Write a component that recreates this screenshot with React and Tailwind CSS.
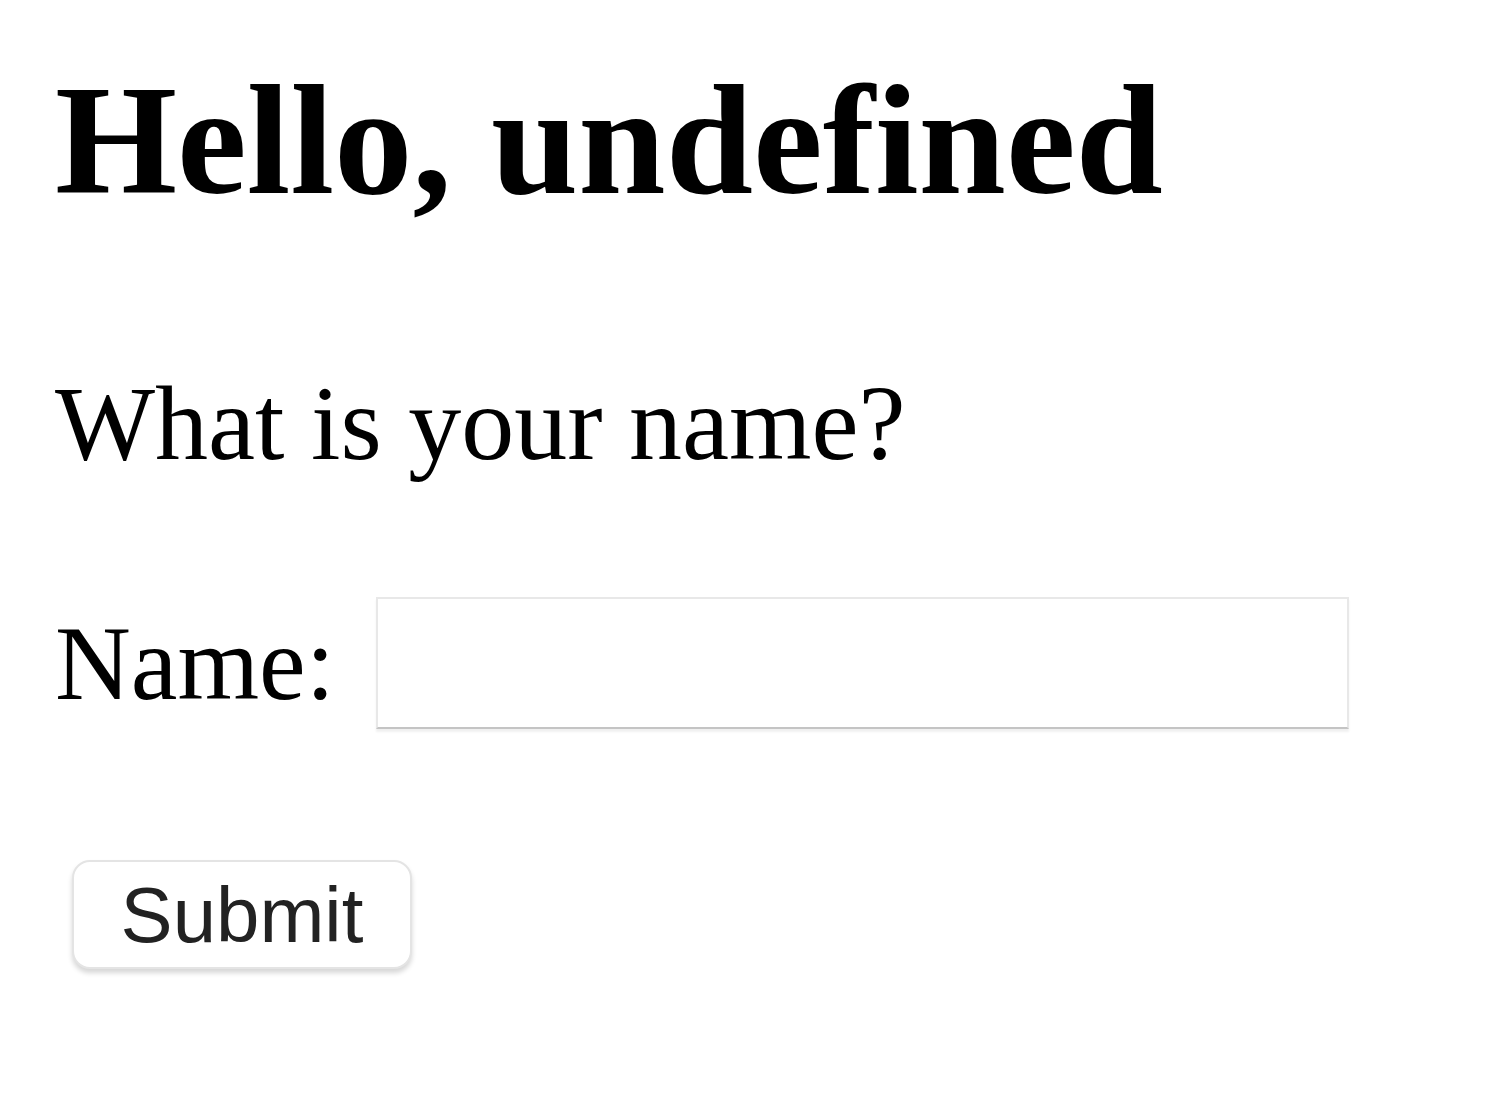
import React, { useState } from 'react';

const App = () => {
  const [name, setName] = useState('');

  return (
    <div className="min-h-screen bg-white pl-[55px] pt-[62px] font-['Liberation_Serif',serif] text-black">
      <h2 className="text-[157px] leading-none font-bold">Hello, undefined</h2>

      <p className="mt-[152px] text-[106px] leading-none">What is your name?</p>

      <form onSubmit={(e) => e.preventDefault()}>
        <div className="mt-[120px] flex items-center">
          <label htmlFor="name" className="text-[105px] leading-none">
            Name:
          </label>
          <input
            id="name"
            type="text"
            value={name}
            onChange={(e) => setName(e.target.value)}
            className="ml-[41px] h-[132px] w-[973px] border-2 border-[#e8e8e8] border-b-[#c4c4c4] bg-white px-4 text-[70px] shadow-[0_3px_2px_rgba(0,0,0,0.06)] outline-none"
          />
        </div>

        <button
          type="submit"
          className="ml-[17px] mt-[131px] flex h-[109px] w-[340px] items-center justify-center rounded-[18px] border-2 border-[#e4e4e4] bg-white font-['Liberation_Sans',Arial,sans-serif] text-[78px] leading-none text-[#222] shadow-[0_4px_5px_rgba(0,0,0,0.16)]"
        >
          Submit
        </button>
      </form>
    </div>
  );
};

export default App;
